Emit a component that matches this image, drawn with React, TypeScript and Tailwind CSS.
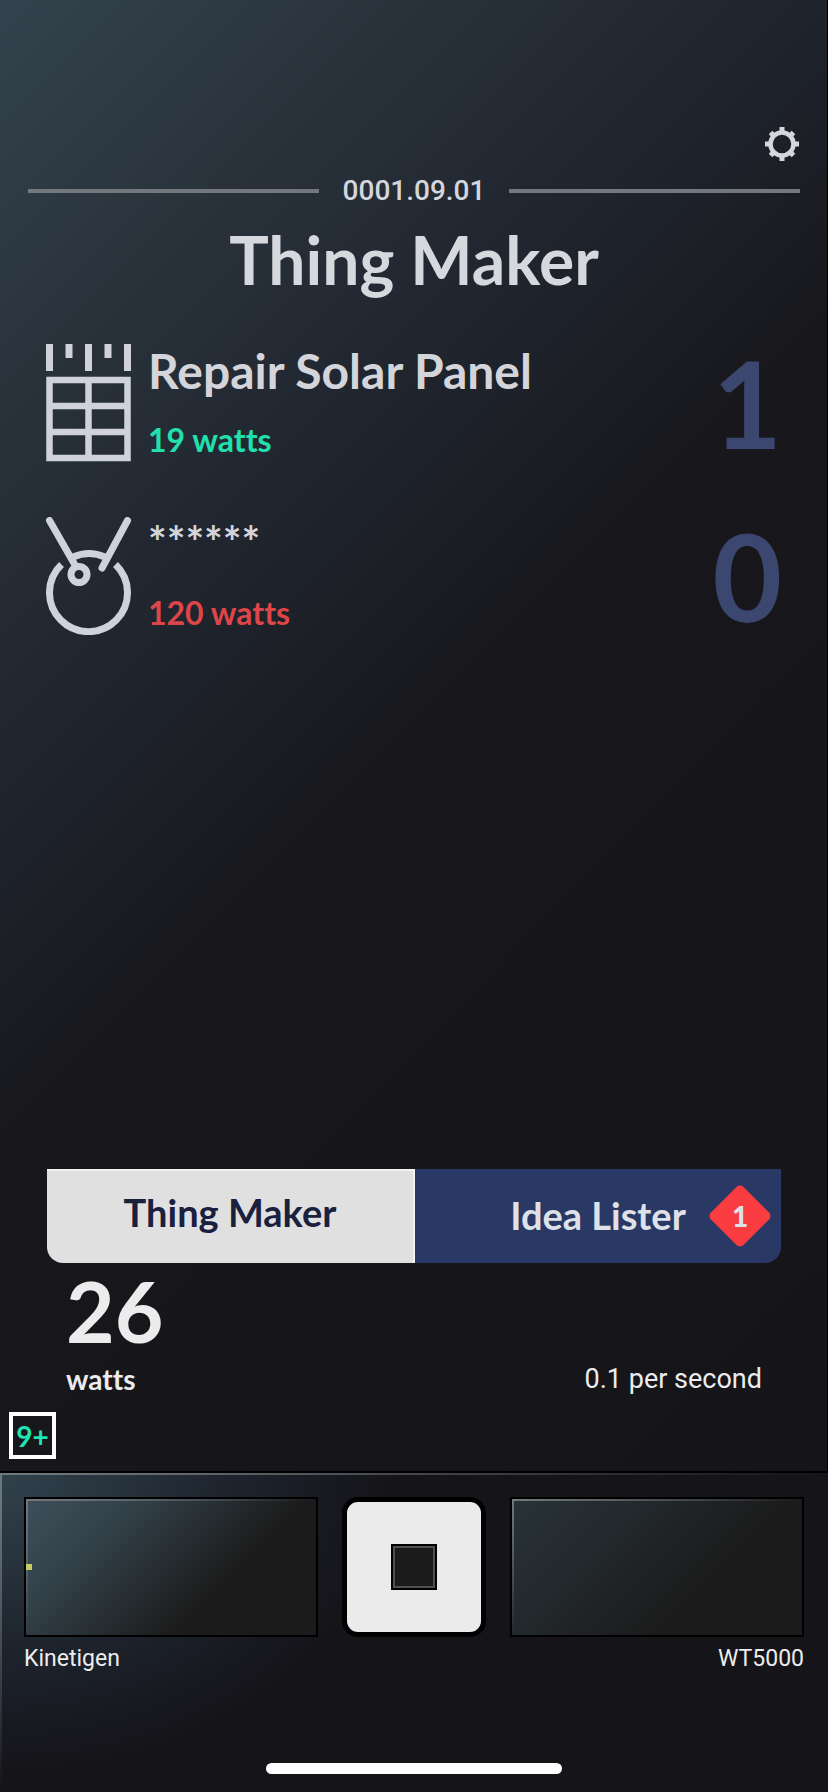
import type { ReactNode } from "react";

type Thing = {
  name: string;
  cost: string;
  hidden: boolean;
  affordable: boolean;
  count: number;
  icon: ReactNode;
};

function GearIcon() {
  return (
    <svg viewBox="0 0 36 36" className="h-9 w-9" fill="none" stroke="currentColor" aria-hidden="true">
      <circle cx="18" cy="18" r="11.5" strokeWidth="4.5" />
      <path d="M18 1v5M18 30v5M1 18h5M30 18h5" strokeWidth="5" />
      <path d="M6.5 6.5l4 4M25.5 25.5l4 4M29.5 6.5l-4 4M10.5 25.5l-4 4" strokeWidth="5" />
    </svg>
  );
}

function SolarPanelIcon() {
  return (
    <svg viewBox="0 0 86 118" className="h-[118px] w-[86px]" fill="none" stroke="currentColor" aria-hidden="true">
      <path d="M3.5 0v27M42.5 0v27M81.5 0v27M23 0v14M62 0v14" strokeWidth="7" />
      <path d="M3.5 36h78v78h-78zM42.5 36v78M3.5 62h78M3.5 88h78" strokeWidth="6.5" />
    </svg>
  );
}

function DrumIcon() {
  return (
    <svg viewBox="0 0 86 118" className="h-[118px] w-[86px]" fill="none" stroke="currentColor" aria-hidden="true">
      <path d="M15.5 47.5A39 39 0 1 0 69.5 47.5" strokeWidth="7" />
      <path d="M27 40A39 39 0 0 1 59 40" strokeWidth="7" />
      <path d="M3.5 3.5L29 48M81.5 3.5L56 51" strokeWidth="7" strokeLinecap="round" />
      <circle cx="33" cy="57.5" r="8" strokeWidth="7" />
    </svg>
  );
}

const things: Thing[] = [
  { name: "Repair Solar Panel", cost: "19 watts", hidden: false, affordable: true, count: 1, icon: <SolarPanelIcon /> },
  { name: "******", cost: "120 watts", hidden: true, affordable: false, count: 0, icon: <DrumIcon /> },
];

function ThingRow({ thing }: { thing: Thing }) {
  return (
    <li>
      <button type="button" className="flex w-full items-center gap-4 text-left">
        <span className="shrink-0 text-[#cfd2da]">{thing.icon}</span>
        <span className="flex flex-1 flex-col gap-[22px] pb-0.5">
          <span
            className={`font-bold text-[#d3d5db] ${thing.hidden ? "pb-1.5 text-[44px] leading-[48px]" : "text-[48px] leading-[54px]"}`}
          >
            {thing.name}
          </span>
          <span className={`text-[32px] leading-10 font-bold ${thing.affordable ? "text-[#21e0ae]" : "text-[#dd4549]"}`}>
            {thing.cost}
          </span>
        </span>
        <span className="text-[120px] leading-[118px] font-bold text-[#3c4770]">{thing.count}</span>
      </button>
    </li>
  );
}

// bevelled light along the top and left edges
function EdgeLight() {
  return (
    <>
      <span className="absolute inset-x-0 top-0 h-[2px] bg-linear-to-r from-[#71797d] to-transparent" />
      <span className="absolute top-0 left-0 h-full w-[2px] bg-linear-to-b from-[#71797d] to-transparent" />
    </>
  );
}

export default function App() {
  return (
    <div className="flex min-h-screen flex-col bg-[#151419] font-['Lato',sans-serif] text-[#ececee] [font-variant-ligatures:none]">
      <main className="flex flex-1 flex-col border-b-2 border-black bg-[linear-gradient(135deg,#33434d_0%,#29323b_18%,#1f242d_35%,#18181c_50%,#151419_100%)] shadow-[inset_-1px_0_#000]">
        <header className="px-7 pt-[126px]">
          <div className="flex justify-end">
            <button type="button" aria-label="Settings" className="text-[#d5d7da]">
              <GearIcon />
            </button>
          </div>
          <div className="flex items-center gap-6 pt-[9px]">
            <span className="h-1 flex-1 bg-[#73777e]" />
            <time className="font-['Roboto',sans-serif] text-[28px] leading-10 font-medium text-[#d3d6dc]">0001.09.01</time>
            <span className="h-1 flex-1 bg-[#73777e]" />
          </div>
          <h1 className="pt-[13px] text-center text-[66px] leading-[72px] font-bold text-[#d5d8dd]">Thing Maker</h1>
        </header>

        <ul className="flex flex-col gap-[55px] px-[46px] pt-12">
          {things.map((thing) => (
            <ThingRow key={thing.name} thing={thing} />
          ))}
        </ul>

        <nav className="mx-[47px] mt-auto flex h-[94px] overflow-hidden rounded-b-2xl">
          <button
            type="button"
            className="flex-1 border-t-2 border-r-2 border-t-[#f2f2f2] border-r-[#f2f2f2] bg-[#e0e0e0] pb-2.5 text-[38px] font-bold text-[#19213f]"
          >
            Thing Maker
          </button>
          <button type="button" className="relative flex-1 bg-[#2a3865] pb-0.5 text-[38px] font-bold text-[#dfe1e8]">
            Idea Lister
            <span className="absolute top-1/2 right-[18px] flex size-[46px] -translate-y-1/2 rotate-45 items-center justify-center rounded-[5px] bg-[#f83c40] text-[28px] font-black">
              <span className="-rotate-45">1</span>
            </span>
          </button>
        </nav>

        <section className="flex items-end justify-between px-[66px] pt-1">
          <div>
            <p className="text-[84px] leading-[88px] font-bold text-[#ececec]">26</p>
            <p className="pt-1.5 text-[28px] leading-9 font-bold">watts</p>
          </div>
          <p className="font-['Roboto',sans-serif] text-[27px] leading-9">0.1 per second</p>
        </section>

        <div className="px-[9px] pt-[15px] pb-3">
          <button
            type="button"
            className="flex size-[47px] items-center justify-center border-4 border-white text-[28px] font-bold text-[#1fe5b0]"
          >
            9+
          </button>
        </div>
      </main>

      <footer className="relative bg-[radial-gradient(ellipse_390px_300px_at_0_0,#31424d_0%,#1d232d_60%,#151419_100%)] px-6 pt-6">
        <EdgeLight />
        <div className="flex gap-6">
          <section className="flex-1">
            <div className="relative flex h-[140px] items-center border-2 border-black bg-[linear-gradient(135deg,#3c4f59_0%,#33424a_25%,#1b1b1b_66%)]">
              <EdgeLight />
              <span className="relative size-[6px] bg-[#c9c966]" />
            </div>
            <h2 className="pt-[6px] font-['Roboto',sans-serif] text-[23px] leading-8">Kinetigen</h2>
          </section>
          <button
            type="button"
            aria-label="Generate"
            className="flex h-[140px] w-36 items-center justify-center rounded-2xl border-[5px] border-black bg-[#ebebeb]"
          >
            <span className="size-[46px] border-2 border-black bg-[#1b1b1b] outline-2 -outline-offset-4 outline-[#505050]" />
          </button>
          <section className="flex-1">
            <div className="relative h-[140px] border-2 border-black bg-[linear-gradient(135deg,#283237_0%,#242b2f_25%,#1b1b1b_66%)]">
              <EdgeLight />
            </div>
            <h2 className="pt-[6px] text-right font-['Roboto',sans-serif] text-[23px] leading-8">WT5000</h2>
          </section>
        </div>
        <div className="mx-auto mt-[88px] mb-[18px] h-[11px] w-[296px] rounded-full bg-white" />
      </footer>
    </div>
  );
}
